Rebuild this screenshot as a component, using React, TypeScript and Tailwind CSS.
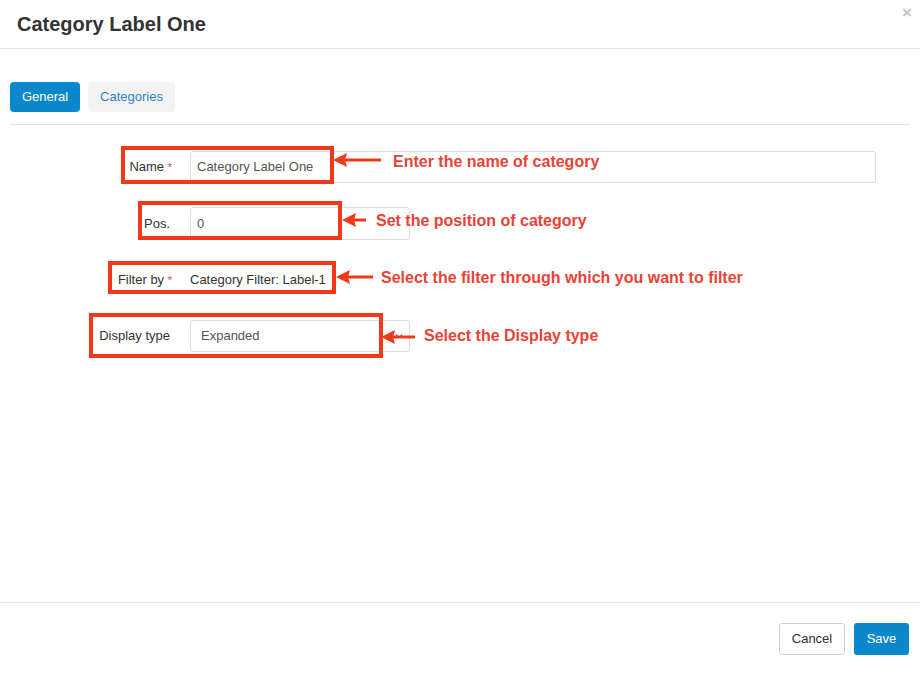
import React from 'react';

const font = { fontFamily: '"Liberation Sans", Arial, sans-serif' };

function Arrow({ tip, tail, y }: { tip: number; tail: number; y: number }) {
  return (
    <g>
      <line x1={tip + 10} y1={y} x2={tail} y2={y} stroke="#f0381a" strokeWidth={3} />
      <polygon points={`${tip},${y} ${tip + 14},${y - 7} ${tip + 12},${y} ${tip + 14},${y + 7}`} fill="#f0381a" />
    </g>
  );
}

export default function App() {
  const notes = [
    { box: 'left-[121px] top-[146px] w-[213px] h-[38px]', text: 'left-[393px] top-[152px]', label: 'Enter the name of category' },
    { box: 'left-[138px] top-[201px] w-[204px] h-[39px]', text: 'left-[376px] top-[211px]', label: 'Set the position of category' },
    { box: 'left-[108px] top-[261px] w-[228px] h-[33px]', text: 'left-[381px] top-[268px]', label: 'Select the filter through which you want to filter' },
    { box: 'left-[89px] top-[313px] w-[294px] h-[45px]', text: 'left-[424px] top-[326px]', label: 'Select the Display type' },
  ];

  return (
    <div className="relative w-[920px] h-[675px] bg-white flex flex-col text-[#333]" style={font}>
      {/* header */}
      <div className="h-[49px] border-b border-[#e5e5e5] flex items-center px-[17px] shrink-0">
        <h1 className="text-[20px] font-bold leading-6 text-[#333]">Category Label One</h1>
        <span className="absolute right-[8px] top-[3px] text-[17px] font-bold text-[#c4c4c4] leading-5">×</span>
      </div>

      {/* body */}
      <div className="flex-1 px-[10px] pt-[33px]">
        <div className="flex gap-[8px] pb-[12px] border-b border-[#e3e3e3]">
          <button className="h-[30px] w-[70px] rounded-[4px] bg-[#0b88cc] text-white text-[13px]">General</button>
          <button className="h-[30px] w-[87px] rounded-[4px] bg-[#f3f3f3] text-[#2a84c8] text-[13px]">Categories</button>
        </div>

        <div className="flex flex-col gap-6 pt-[26px] text-[13px]">
          <div className="flex items-center gap-[18px]">
            <label className="w-[162px] text-right">
              Name <span className="text-[#e03c3c] text-[11px]">*</span>
            </label>
            <div className="w-[686px] h-[32px] border border-[#dcdcdc] rounded-[3px] flex items-center px-[6px] text-[#555]">
              Category Label One
            </div>
          </div>
          <div className="flex items-center gap-[18px]">
            <label className="w-[162px] text-right pr-[2px]">Pos.</label>
            <div className="w-[220px] h-[33px] border border-[#dcdcdc] rounded-[3px] flex items-center px-[6px] text-[#555]">0</div>
          </div>
          <div className="flex items-center gap-[18px] h-[32px]">
            <label className="w-[162px] text-right">
              Filter by <span className="text-[#e03c3c] text-[11px]">*</span>
            </label>
            <span className="text-[#333]">Category Filter: Label-1</span>
          </div>
          <div className="flex items-center gap-[18px]">
            <label className="w-[162px] text-right pr-[2px]">Display type</label>
            <div className="w-[220px] h-[32px] border border-[#dcdcdc] rounded-[3px] flex items-center justify-between pl-[10px] pr-[6px] text-[#555]">
              <span>Expanded</span>
              <svg width="8" height="6" viewBox="0 0 8 6">
                <path d="M1 1.5 L4 4.5 L7 1.5" stroke="#777" strokeWidth="1.3" fill="none" />
              </svg>
            </div>
          </div>
        </div>
      </div>

      {/* footer */}
      <div className="h-[73px] border-t border-[#e8e8e8] flex justify-end items-start gap-[9px] pt-[20px] pr-[11px] shrink-0">
        <button className="h-[32px] w-[66px] border border-[#d0d0d0] rounded-[3px] bg-white text-[13px] text-[#333]">Cancel</button>
        <button className="h-[32px] w-[55px] rounded-[3px] bg-[#0b88cc] text-white text-[13px]">Save</button>
      </div>

      {/* annotations */}
      {notes.map((n, i) => (
        <div key={i} className={`absolute border-4 border-[#f0381a] ${n.box}`} />
      ))}
      <svg className="absolute left-0 top-0 pointer-events-none" width="920" height="675">
        <Arrow tip={333} tail={381} y={160} />
        <Arrow tip={342} tail={366} y={220} />
        <Arrow tip={336} tail={373} y={277} />
        <Arrow tip={381} tail={415} y={337} />
      </svg>
      {notes.map((n, i) => (
        <span key={i} className={`absolute text-[16px] font-bold leading-5 text-[#ea4336] ${n.text}`}>{n.label}</span>
      ))}
    </div>
  );
}
